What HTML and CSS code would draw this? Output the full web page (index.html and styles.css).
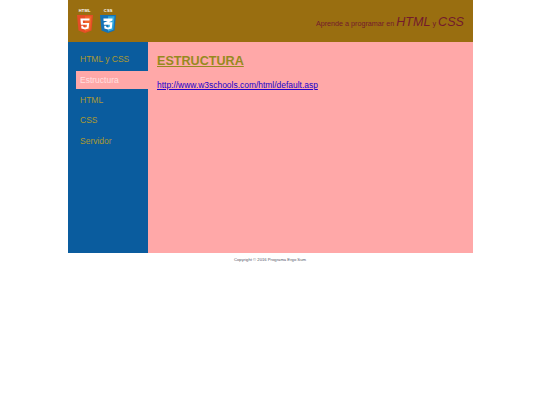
FILE: index.html
```html
<!DOCTYPE html>
<html lang="es">
<head>
<meta charset="utf-8">
<title>Aprende a programar en HTML y CSS</title>
<link rel="stylesheet" href="styles.css">
</head>
<body>
<div class="page">
  <header class="top">
    <div class="logos">
      <div class="logo">
        <span class="logo-label">HTML</span>
        <svg class="shield" viewBox="0 0 16 18" width="16" height="18" aria-hidden="true">
          <path d="M0 0h16l-1.500 15.600L8 18l-6.500-2.400z" fill="#e44d26"/>
          <path d="M8 1.300h6.500l-1.200 13.400L8 16.500z" fill="#f16529"/>
          <path d="M3.400 3.400h9.200l-.2 2.200H5.800l.2 2.300h6.200l-.6 5.500L8 14.600l-3.600-1.200-.2-2.700h2l.1 1.300 1.700.5 1.700-.5.200-2.200H3.900z" fill="#fff"/>
        </svg>
      </div>
      <div class="logo">
        <span class="logo-label">CSS</span>
        <svg class="shield" viewBox="0 0 16 18" width="16" height="18" aria-hidden="true">
          <path d="M0 0h16l-1.500 15.600L8 18l-6.500-2.400z" fill="#1572b6"/>
          <path d="M8 1.300h6.500l-1.200 13.400L8 16.500z" fill="#33a9dc"/>
          <path d="M3.400 3.400h9.200l-.2 2.200-3.700 1.600h3.700l-.6 6.200L8 14.600l-3.600-1.200-.2-2.700h2l.1 1.300 1.700.5 1.700-.5.200-2.200H3.900l-.2-2.100 4-1.600H3.600z" fill="#fff"/>
        </svg>
      </div>
    </div>
    <p class="tagline">Aprende a programar en <em class="big">HTML</em> y <em class="big">CSS</em></p>
  </header>
  <div class="middle">
    <nav class="side">
      <a class="item" href="#">HTML y CSS</a>
      <a class="item active" href="#">Estructura</a>
      <a class="item" href="#">HTML</a>
      <a class="item" href="#">CSS</a>
      <a class="item" href="#">Servidor</a>
    </nav>
    <main class="content">
      <h1 class="title">ESTRUCTURA</h1>
      <p class="link-row"><a class="link" href="#">http://www.w3schools.com/html/default.asp</a></p>
    </main>
  </div>
  <footer class="foot">Copyright © 2016 Programa Ergo Sum</footer>
</div>
</body>
</html>
```

FILE: styles.css
```css
html, body {
  margin: 0;
  padding: 0;
  background: #fff;
  font-family: "Liberation Sans", Arial, sans-serif;
}
.page {
  width: 405px;
  margin: 0 auto;
}
.top {
  height: 42px;
  background: #996e10;
  display: flex;
  justify-content: space-between;
  align-items: flex-start;
  padding: 0 8.5px 0 9px;
  box-sizing: border-box;
}
.logos {
  display: flex;
  gap: 7px;
  padding-top: 8px;
}
.logo {
  display: flex;
  flex-direction: column;
  align-items: center;
  width: 16.500px;
}
.logo-label {
  font-size: 4px;
  line-height: 6px;
  font-weight: bold;
  letter-spacing: 0.2px;
  color: #fff;
  margin-bottom: 1px;
}
.shield {
  display: block;
}
.tagline {
  margin: 14px 0 0;
  color: #731a2c;
  font-size: 7.200px;
  line-height: 17px;
}
.big {
  font-size: 12.600px;
}
.middle {
  display: flex;
  height: 211px;
}
.side {
  width: 80.500px;
  flex: none;
  background: #0a5c9e;
  padding-top: 7px;
  box-sizing: border-box;
  display: flex;
  flex-direction: column;
  align-items: stretch;
}
.item {
  height: 20.200px;
  line-height: 20.200px;
  margin-left: 8.500px;
  padding-left: 4px;
  font-size: 8.500px;
  color: #ad9a30;
  text-decoration: none;
}
.item.active {
  background: #ffa8a8;
  color: #ffe0e0;
  height: 18px;
  line-height: 18px;
  margin: 1.500px 0 1.500px 8.500px;
}
.content {
  flex: 1;
  background: #ffa8a8;
  padding: 0 9px;
}
.title {
  margin: 10.500px 0 0;
  color: #968a1e;
  font-size: 12.600px;
  line-height: 16px;
  text-decoration: underline;
}
.link-row {
  margin: 11px 0 0;
  font-size: 8.450px;
  line-height: 11px;
}
.link {
  color: #2200cc;
}
.foot {
  text-align: center;
  font-size: 4.200px;
  line-height: 5px;
  padding-top: 4px;
  color: #555566;
}
```
